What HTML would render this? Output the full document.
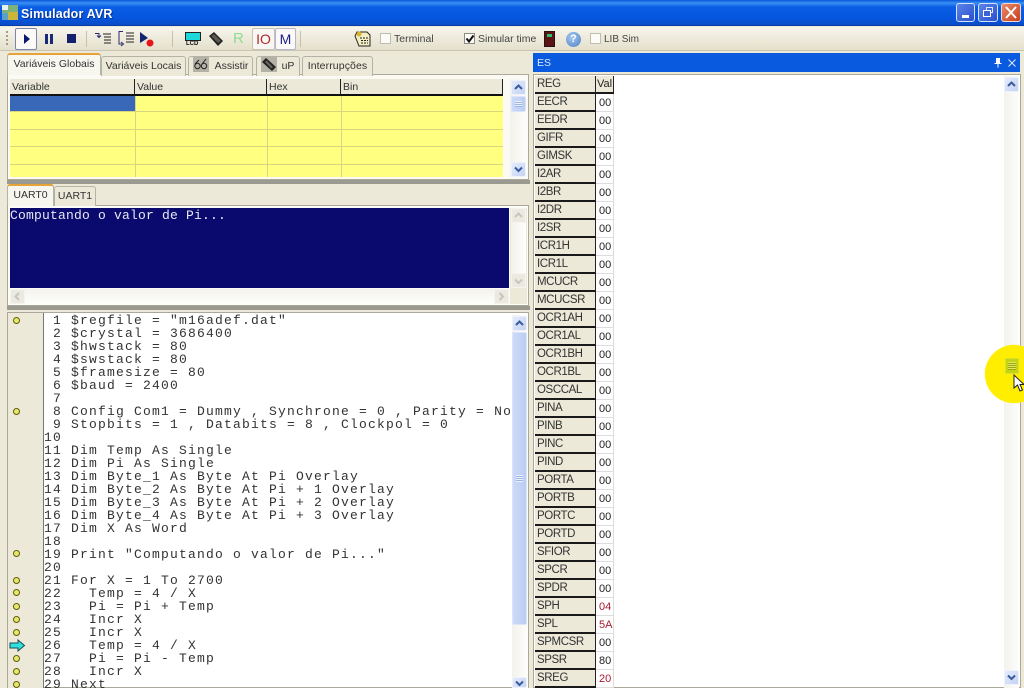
<!DOCTYPE html>
<html><head><meta charset="utf-8"><style>
html,body{margin:0;padding:0;background:#ece9d8}
#r{position:relative;width:1024px;height:688px;overflow:hidden;background:#ece9d8;font:10.5px "Liberation Sans",sans-serif;color:#222}
#r div,#r span.a,#r svg,#r pre{position:absolute}
.tab{background:#ece9d8;border:1px solid #b5b3a5;border-bottom:none;border-radius:3px 3px 0 0;height:20px;line-height:20px;text-align:center;font-size:10.5px;color:#333;box-sizing:border-box}
.act{background:#f7f6ef;border-top:2px solid #e6a33a}
.sb{background:linear-gradient(90deg,#f3f2ec,#fdfdfb)}
.sbtn{background:linear-gradient(135deg,#e4ebfb,#c4d3f4);border:1px solid #eef2fc;box-sizing:border-box;border-radius:2px}
.thumb{background:linear-gradient(90deg,#ccd9f8,#bccdf4);border:1px solid #dbe4f9;box-sizing:border-box;border-radius:2px}
.vl{background:#d8d48a;width:1px}
.yl{background:#d9d57f;height:1px;left:10px;width:493px}
.hd{top:79px;height:15px;line-height:17px;background:#ece9d8;border-bottom:2px solid #111;border-right:1px solid #222;font-size:10.5px;padding-left:2px;box-sizing:content-box;color:#333}
table{position:absolute;left:535px;top:76px;border-collapse:separate;border-spacing:0;table-layout:fixed;width:79px}
td{padding:0;height:18px;line-height:16px;font-size:11px;box-sizing:border-box;overflow:hidden;white-space:nowrap}
td.k{width:61px;background:#ece9d8;border-right:1px solid #222;border-bottom:2px solid #1a1a1a;padding-left:2px;padding-top:1px;line-height:15px;color:#333;font-size:11.500px;letter-spacing:-.4px}
td.v{width:18px;background:#fff;border-bottom:1px solid #ddd;border-right:1px solid #ddd;padding-left:3px;color:#222;font-size:11px}
td.red{color:#a81a30}
pre{margin:0;left:44px;top:314px;font:13px/13px "Liberation Mono",monospace;letter-spacing:1.2px;color:#333;white-space:pre}
.dot{width:7px;height:7px;left:13px;border-radius:50%;background:#e8e868;border:1px solid #5d5d10;box-sizing:border-box}
</style></head><body><div id="r">

<!-- title bar -->
<div style="left:0;top:0;width:1024px;height:26px;background:linear-gradient(180deg,#0a56d8 0,#3a90f5 3px,#0a5ee4 7px,#0656e0 18px,#0a4cc4 25px,#08308c 26px)"></div>
<svg style="left:2px;top:5px" width="16" height="15"><rect width="16" height="15" fill="#7fb27a"/><rect x="0" y="0" width="6" height="5" fill="#e8f0f0"/><rect x="6" y="7" width="10" height="8" fill="#c9b63a"/><rect x="0" y="8" width="6" height="7" fill="#5aa0c8"/></svg>
<div style="left:21px;top:6px;font:bold 12.500px/16px 'Liberation Sans',sans-serif;letter-spacing:.15px;color:#fff;text-shadow:1px 1px 0 #0a2f90">Simulador AVR</div>
<div style="left:956px;top:3px;width:19px;height:19px;border:1px solid #d5e2fa;border-radius:3px;box-sizing:border-box;background:linear-gradient(135deg,#5a84ec,#2a50c8)"><div style="left:5px;top:11px;width:7px;height:3px;background:#fff"></div></div>
<div style="left:978px;top:3px;width:20px;height:19px;border:1px solid #d5e2fa;border-radius:3px;box-sizing:border-box;background:linear-gradient(135deg,#5a84ec,#2a50c8)"><div style="left:7px;top:3px;width:7px;height:6px;border:1px solid #dfe8fb;box-sizing:border-box"></div><div style="left:4px;top:6px;width:8px;height:7px;border:1px solid #fff;box-sizing:border-box;background:#3c62d4"></div></div>
<div style="left:1001px;top:3px;width:20px;height:19px;border:1px solid #eed8d0;border-radius:3px;box-sizing:border-box;background:linear-gradient(135deg,#e88a68,#c8401c)"><svg style="left:3px;top:2px" width="12" height="13"><path d="M1 1L11 12M11 1L1 12" stroke="#fff" stroke-width="2"/></svg></div>

<!-- toolbar -->
<div style="left:0;top:27px;width:1024px;height:23px;background:linear-gradient(180deg,#f7f5ec,#e4e0cc)"></div>
<div style="left:0;top:50px;width:1024px;height:1px;background:#c8c5b2"></div>
<div style="left:6px;top:31px;width:2px;height:15px;background:repeating-linear-gradient(180deg,#a09d8c 0 2px,transparent 2px 4px)"></div>
<div style="left:15px;top:28px;width:22px;height:22px;background:#fbfaf6;border:1px solid #7a86ac;border-radius:2px;box-sizing:border-box"></div>
<svg style="left:22px;top:33px" width="10" height="12"><path d="M2 1L8 6L2 11Z" fill="#0a1a6e"/></svg>
<div style="left:45px;top:34px;width:3px;height:10px;background:#1a2a78"></div><div style="left:50px;top:34px;width:3px;height:10px;background:#1a2a78"></div>
<div style="left:67px;top:34px;width:9px;height:9px;background:#15206e"></div>
<div style="left:86px;top:31px;width:1px;height:16px;background:#c4c1ae"></div>
<svg style="left:94px;top:31px" width="18" height="15" fill="none" stroke="#222"><path d="M9 3H17M10 6H17M10 9H17M10 12H17" stroke-width="1"/><path d="M1 2.500H5V6M3 4.500L5 6.500L7 4.500" stroke="#2a2a70"/></svg>
<svg style="left:117px;top:30px" width="18" height="17" fill="none" stroke="#222"><path d="M9 3H17M9 6H17M9 9H17M9 12H17"/><path d="M6 1.500H2V14H5M4 12L6.500 14L4 16" stroke="#2a2a70"/></svg>
<svg style="left:139px;top:30px" width="17" height="17"><path d="M1 2L9 8L1 13Z" fill="#14246e"/><circle cx="11" cy="13" r="3.500" fill="#e8141a"/></svg>
<div style="left:172px;top:31px;width:1px;height:16px;background:#c4c1ae"></div>
<div style="left:185px;top:32px;width:16px;height:9px;background:#1fd6d8;border:1px solid #222;box-sizing:border-box"></div>
<div style="left:186px;top:41px;width:16px;font:bold 6px/7px 'Liberation Sans',sans-serif;color:#111">LCD</div>
<svg style="left:207px;top:30px" width="18" height="18"><path d="M2 6L7 2L16 11L11 16Z" fill="#222"/><path d="M4 6L7 4L14 11L11 13Z" fill="#5a5a50"/></svg>
<div style="left:233px;top:30px;font:15px/18px 'Liberation Sans',sans-serif;color:#8fdc92">R</div>
<div style="left:252px;top:28px;width:23px;height:22px;background:#f8f7f3;border:1px solid #c6c3b4;border-radius:2px;box-sizing:border-box;text-align:center;font:14px/20px 'Liberation Sans',sans-serif;color:#b02a2a">IO</div>
<div style="left:275px;top:28px;width:21px;height:22px;background:#fbfaf8;border:1px solid #b5b5cc;border-radius:2px;box-sizing:border-box;text-align:center;font:14px/20px 'Liberation Sans',sans-serif;color:#20208a">M</div>
<div style="left:300px;top:31px;width:1px;height:16px;background:#c4c1ae"></div>
<svg style="left:354px;top:30px" width="17" height="17"><path d="M3 2H13L16 5V16H5L1 6Z" fill="#f4efc0" stroke="#222"/><path d="M6 8H14M7 10.500H14M7 13H14" stroke="#222" stroke-dasharray="2 1"/><circle cx="5" cy="4" r="2.500" fill="#d9b030"/></svg>
<div style="left:380px;top:33px;width:11px;height:11px;background:#fbfbf7;border:1px solid #c0bdae;box-sizing:border-box"></div>
<div style="left:394px;top:32px;font-size:10.5px;line-height:15px;color:#444">Terminal</div>
<div style="left:464px;top:33px;width:11px;height:11px;background:#fbfbf7;border:1px solid #8e8c80;box-sizing:border-box"></div>
<svg style="left:465px;top:34px" width="10" height="10"><path d="M1.500 4.500L4 7.500L8.500 1.500" fill="none" stroke="#111" stroke-width="2"/></svg>
<div style="left:478px;top:32px;font-size:10.5px;line-height:15px;color:#444">Simular time</div>
<div style="left:544px;top:31px;width:11px;height:16px;background:#5a1414;border:1px solid #2a1010;box-sizing:border-box"><div style="left:2px;top:2px;width:5px;height:3px;background:#2ec070"></div></div>
<div style="left:566px;top:32px;width:15px;height:15px;border-radius:50%;background:radial-gradient(circle at 40% 35%,#a8c8ee,#4a80c8);color:#fff;font:bold 11px/15px 'Liberation Sans',sans-serif;text-align:center">?</div>
<div style="left:590px;top:33px;width:11px;height:11px;background:#fbfbf7;border:1px solid #c0bdae;box-sizing:border-box"></div>
<div style="left:604px;top:32px;font-size:10px;line-height:15px;color:#444">LIB Sim</div>

<!-- top-left panel -->
<div style="left:7px;top:74px;width:522px;height:106px;background:#fbfaf5;border:1px solid #aca899;box-sizing:border-box"></div>
<div class="tab act" style="left:7px;top:53px;width:94px;height:22px;line-height:18px;border-bottom:none">Variáveis Globais</div>
<div class="tab" style="left:101px;top:56px;width:85px;line-height:19px">Variáveis Locais</div>
<div class="tab" style="left:188px;top:56px;width:65px;line-height:19px;padding-left:22px">Assistir</div>
<svg style="left:193px;top:57px" width="16" height="15"><rect width="16" height="15" fill="#b4b2a6"/><circle cx="4.500" cy="9" r="2.700" fill="none" stroke="#222"/><circle cx="11" cy="9" r="2.700" fill="none" stroke="#222"/><path d="M2 7L6 3M9 7L13 2" stroke="#222"/></svg>
<div class="tab" style="left:256px;top:56px;width:44px;line-height:19px;padding-left:20px">uP</div>
<svg style="left:261px;top:57px" width="16" height="15"><rect width="16" height="15" fill="#b4b2a6"/><path d="M1 5L5 1L15 10L11 14Z" fill="#222"/><path d="M4 5L5.500 3.500L12 10L10.500 11.500Z" fill="#6a6a60"/></svg>
<div class="tab" style="left:302px;top:56px;width:71px;line-height:19px;letter-spacing:.1px">Interrupções</div>

<!-- grid -->
<div style="left:10px;top:95px;width:493px;height:82px;background:#ffff80"></div>
<div style="left:10px;top:95px;width:125px;height:16px;background:#3a68b8"></div>
<div class="yl" style="top:111px"></div><div class="yl" style="top:129px"></div><div class="yl" style="top:146px"></div><div class="yl" style="top:164px"></div>
<div class="vl" style="left:135px;top:95px;height:82px"></div><div class="vl" style="left:267px;top:95px;height:82px"></div><div class="vl" style="left:341px;top:95px;height:82px"></div>
<div class="hd" style="left:10px;width:122px">Variable</div>
<div class="hd" style="left:135px;width:129px">Value</div>
<div class="hd" style="left:267px;width:71px">Hex</div>
<div class="hd" style="left:341px;width:159px">Bin</div>
<div class="sb" style="left:510px;top:79px;width:17px;height:98px"></div>
<div class="sbtn" style="left:511px;top:80px;width:15px;height:15px"></div>
<svg style="left:514px;top:84px" width="10" height="7"><path d="M1 5L4.500 1.500L8 5" fill="none" stroke="#3a5a9a" stroke-width="2"/></svg>
<div class="thumb" style="left:511px;top:96px;width:15px;height:16px"></div>
<div style="left:515px;top:101px;width:7px;height:6px;background:repeating-linear-gradient(180deg,#eef2fc 0 1px,#9db4e4 1px 2px)"></div>
<div class="sbtn" style="left:511px;top:162px;width:15px;height:15px"></div>
<svg style="left:514px;top:166px" width="10" height="7"><path d="M1 1.500L4.500 5L8 1.500" fill="none" stroke="#3a5a9a" stroke-width="2"/></svg>
<div style="left:7px;top:180px;width:523px;height:4px;background:#9b9a90"></div>

<!-- UART -->
<div style="left:7px;top:205px;width:522px;height:101px;background:#fbfbf7;border:1px solid #aca899;box-sizing:border-box"></div>
<div class="tab act" style="left:7px;top:184px;width:47px;height:22px;line-height:18px">UART0</div>
<div class="tab" style="left:54px;top:186px;width:42px;line-height:19px">UART1</div>
<div style="left:10px;top:208px;width:499px;height:80px;background:#0a0a6e"></div>
<div style="left:10px;top:208px;font:13px/15px 'Liberation Mono',monospace;letter-spacing:.2px;color:#e8e8f4">Computando o valor de Pi...</div>
<div style="left:510px;top:208px;width:17px;height:96px;background:#ece9d8"></div>
<div class="sb" style="left:511px;top:208px;width:15px;height:80px"></div>
<div style="left:511px;top:208px;width:15px;height:15px;background:#ece9e0;border:1px solid #f4f3ee;box-sizing:border-box"></div>
<svg style="left:514px;top:212px" width="10" height="7"><path d="M1 5L4.500 1.500L8 5" fill="none" stroke="#c8c6bc" stroke-width="2"/></svg>
<div style="left:511px;top:273px;width:15px;height:15px;background:#ece9e0;border:1px solid #f4f3ee;box-sizing:border-box"></div>
<svg style="left:514px;top:278px" width="10" height="7"><path d="M1 1.500L4.500 5L8 1.500" fill="none" stroke="#c8c6bc" stroke-width="2"/></svg>
<div style="left:10px;top:289px;width:499px;height:15px;background:linear-gradient(180deg,#f4f3ee,#fdfdfb)"></div>
<div style="left:10px;top:289px;width:15px;height:15px;background:#ece9e0;border:1px solid #f4f3ee;box-sizing:border-box"></div>
<svg style="left:14px;top:292px" width="7" height="10"><path d="M5 1L1.500 4.500L5 8" fill="none" stroke="#c8c6bc" stroke-width="2"/></svg>
<div style="left:494px;top:289px;width:15px;height:15px;background:#ece9e0;border:1px solid #f4f3ee;box-sizing:border-box"></div>
<svg style="left:498px;top:292px" width="7" height="10"><path d="M1.500 1L5 4.500L1.500 8" fill="none" stroke="#c8c6bc" stroke-width="2"/></svg>
<div style="left:7px;top:306px;width:523px;height:4px;background:#9b9a90"></div>

<!-- editor -->
<div style="left:7px;top:312px;width:522px;height:376px;background:#fff;border:1px solid #aca899;box-sizing:border-box"></div>
<div style="left:8px;top:313px;width:35px;height:375px;background:#ece9d8;border-right:1px solid #777"></div>
<pre> 1 $regfile = "m16adef.dat"
 2 $crystal = 3686400
 3 $hwstack = 80
 4 $swstack = 80
 5 $framesize = 80
 6 $baud = 2400
 7
 8 Config Com1 = Dummy , Synchrone = 0 , Parity = No
 9 Stopbits = 1 , Databits = 8 , Clockpol = 0
10
11 Dim Temp As Single
12 Dim Pi As Single
13 Dim Byte_1 As Byte At Pi Overlay
14 Dim Byte_2 As Byte At Pi + 1 Overlay
15 Dim Byte_3 As Byte At Pi + 2 Overlay
16 Dim Byte_4 As Byte At Pi + 3 Overlay
17 Dim X As Word
18
19 Print "Computando o valor de Pi..."
20
21 For X = 1 To 2700
22   Temp = 4 / X
23   Pi = Pi + Temp
24   Incr X
25   Incr X
26   Temp = 4 / X
27   Pi = Pi - Temp
28   Incr X
29 Next</pre>
<div class="dot" style="top:317px"></div><div class="dot" style="top:408px"></div><div class="dot" style="top:550px"></div><div class="dot" style="top:577px"></div><div class="dot" style="top:589px"></div><div class="dot" style="top:603px"></div><div class="dot" style="top:616px"></div><div class="dot" style="top:629px"></div><div class="dot" style="top:655px"></div><div class="dot" style="top:668px"></div><div class="dot" style="top:681px"></div>
<svg style="left:9px;top:639px" width="17" height="13"><path d="M1 4H9V1L15.500 6.500L9 12V9H1Z" fill="#2fe0e0" stroke="#1a4a50"/></svg>
<div class="sb" style="left:512px;top:315px;width:16px;height:373px"></div>
<div class="sbtn" style="left:512px;top:316px;width:15px;height:15px"></div>
<svg style="left:515px;top:320px" width="10" height="7"><path d="M1 5L4.500 1.500L8 5" fill="none" stroke="#3a5a9a" stroke-width="2"/></svg>
<div class="thumb" style="left:512px;top:332px;width:15px;height:293px"></div>
<div style="left:516px;top:475px;width:7px;height:7px;background:repeating-linear-gradient(180deg,#eef2fc 0 1px,#9db4e4 1px 2px)"></div>
<div class="sbtn" style="left:512px;top:677px;width:15px;height:11px"></div>
<svg style="left:515px;top:680px" width="10" height="7"><path d="M1 1.500L4.500 5L8 1.500" fill="none" stroke="#3a5a9a" stroke-width="2"/></svg>

<!-- ES panel -->
<div style="left:533px;top:53px;width:487px;height:19px;background:#0a5ae0"></div>
<div style="left:537px;top:56px;font-size:10.5px;line-height:15px;color:#dfeaff">ES</div>
<svg style="left:993px;top:57px" width="10" height="11"><path d="M3 1H7V6H8.500V7H1.500V6H3ZM4.500 7V10.500H5.500V7" fill="#fff"/></svg>
<svg style="left:1007px;top:58px" width="10" height="10"><path d="M1.500 1.500L8.500 8.500M8.500 1.500L1.500 8.500" stroke="#dfeaff" stroke-width="1"/></svg>
<div style="left:533px;top:74px;width:488px;height:614px;background:#fff;border:1px solid #aca899;box-sizing:border-box"></div>
<table><tbody>
<tr><td class="k">REG</td><td class="v" style="background:#ece9d8;padding-left:1px;border-right:1px solid #222;border-bottom:2px solid #1a1a1a">Val</td></tr>
<tr><td class="k">EECR</td><td class="v">00</td></tr>
<tr><td class="k">EEDR</td><td class="v">00</td></tr>
<tr><td class="k">GIFR</td><td class="v">00</td></tr>
<tr><td class="k">GIMSK</td><td class="v">00</td></tr>
<tr><td class="k">I2AR</td><td class="v">00</td></tr>
<tr><td class="k">I2BR</td><td class="v">00</td></tr>
<tr><td class="k">I2DR</td><td class="v">00</td></tr>
<tr><td class="k">I2SR</td><td class="v">00</td></tr>
<tr><td class="k">ICR1H</td><td class="v">00</td></tr>
<tr><td class="k">ICR1L</td><td class="v">00</td></tr>
<tr><td class="k">MCUCR</td><td class="v">00</td></tr>
<tr><td class="k">MCUCSR</td><td class="v">00</td></tr>
<tr><td class="k">OCR1AH</td><td class="v">00</td></tr>
<tr><td class="k">OCR1AL</td><td class="v">00</td></tr>
<tr><td class="k">OCR1BH</td><td class="v">00</td></tr>
<tr><td class="k">OCR1BL</td><td class="v">00</td></tr>
<tr><td class="k">OSCCAL</td><td class="v">00</td></tr>
<tr><td class="k">PINA</td><td class="v">00</td></tr>
<tr><td class="k">PINB</td><td class="v">00</td></tr>
<tr><td class="k">PINC</td><td class="v">00</td></tr>
<tr><td class="k">PIND</td><td class="v">00</td></tr>
<tr><td class="k">PORTA</td><td class="v">00</td></tr>
<tr><td class="k">PORTB</td><td class="v">00</td></tr>
<tr><td class="k">PORTC</td><td class="v">00</td></tr>
<tr><td class="k">PORTD</td><td class="v">00</td></tr>
<tr><td class="k">SFIOR</td><td class="v">00</td></tr>
<tr><td class="k">SPCR</td><td class="v">00</td></tr>
<tr><td class="k">SPDR</td><td class="v">00</td></tr>
<tr><td class="k">SPH</td><td class="v red">04</td></tr>
<tr><td class="k">SPL</td><td class="v red">5A</td></tr>
<tr><td class="k">SPMCSR</td><td class="v">00</td></tr>
<tr><td class="k">SPSR</td><td class="v">80</td></tr>
<tr><td class="k">SREG</td><td class="v red">20</td></tr>
</tbody></table>
<div class="sb" style="left:1004px;top:76px;width:15px;height:612px"></div>
<div class="sbtn" style="left:1004px;top:77px;width:15px;height:15px"></div>
<svg style="left:1007px;top:81px" width="10" height="7"><path d="M1 5L4.500 1.500L8 5" fill="none" stroke="#3a5a9a" stroke-width="2"/></svg>
<div class="sbtn" style="left:1004px;top:670px;width:15px;height:15px"></div>
<svg style="left:1007px;top:674px" width="10" height="7"><path d="M1 1.500L4.500 5L8 1.500" fill="none" stroke="#3a5a9a" stroke-width="2"/></svg>

<!-- highlight + cursor -->
<div style="left:985px;top:345px;width:58px;height:58px;border-radius:50%;background:#ffee00;box-shadow:0 0 1px #ffee00"></div>
<div style="left:1005px;top:358px;width:14px;height:16px;background:#c4d414;border:1px solid #d8e030;box-sizing:border-box"></div>
<div style="left:1008px;top:362px;width:8px;height:8px;background:repeating-linear-gradient(180deg,#e0e860 0 1px,#9aa810 1px 2px)"></div>
<svg style="left:1013px;top:374px" width="11" height="18"><path d="M1 1V14L4.500 11L7 17L9.500 16L7 10.500H11Z" fill="#fff" stroke="#222"/></svg>
</div></body></html>
